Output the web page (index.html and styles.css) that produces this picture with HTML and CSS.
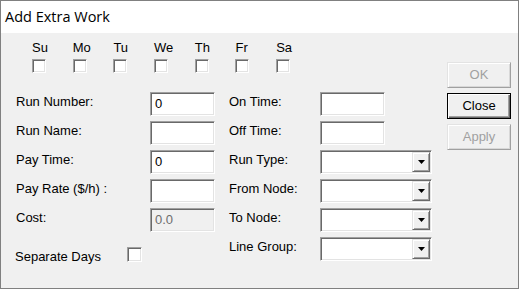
FILE: index.html
```html
<!DOCTYPE html>
<html lang="en">
<head>
<meta charset="UTF-8">
<title>Add Extra Work</title>
<link rel="stylesheet" href="styles.css">
</head>
<body>
<div class="window">
  <div class="titlebar">Add Extra Work</div>
  <div class="client">
    <div class="main">
      <div class="days">
        <div class="day"><span class="day-name">Su</span><span class="check"></span></div>
        <div class="day"><span class="day-name">Mo</span><span class="check"></span></div>
        <div class="day"><span class="day-name">Tu</span><span class="check"></span></div>
        <div class="day"><span class="day-name">We</span><span class="check"></span></div>
        <div class="day"><span class="day-name">Th</span><span class="check"></span></div>
        <div class="day"><span class="day-name">Fr</span><span class="check"></span></div>
        <div class="day"><span class="day-name">Sa</span><span class="check"></span></div>
      </div>

      <div class="form">
        <div class="col col-left">
          <div class="field"><span class="label">Run Number:</span><div class="edit">0</div></div>
          <div class="field"><span class="label">Run Name:</span><div class="edit"></div></div>
          <div class="field"><span class="label">Pay Time:</span><div class="edit">0</div></div>
          <div class="field"><span class="label">Pay Rate ($/h) :</span><div class="edit"></div></div>
          <div class="field"><span class="label">Cost:</span><div class="edit disabled">0.0</div></div>
          <div class="separate"><span class="label">Separate Days</span><span class="check big"></span></div>
        </div>

        <div class="col col-right">
          <div class="field"><span class="label">On Time:</span><div class="edit"></div></div>
          <div class="field"><span class="label">Off Time:</span><div class="edit"></div></div>
          <div class="field"><span class="label">Run Type:</span>
            <div class="combo"><div class="combo-text"></div><div class="drop"><svg width="7" height="4" viewBox="0 0 7 4"><polygon points="0,0 7,0 3.5,4" fill="#000"/></svg></div></div>
          </div>
          <div class="field"><span class="label">From Node:</span>
            <div class="combo"><div class="combo-text"></div><div class="drop"><svg width="7" height="4" viewBox="0 0 7 4"><polygon points="0,0 7,0 3.5,4" fill="#000"/></svg></div></div>
          </div>
          <div class="field"><span class="label">To Node:</span>
            <div class="combo"><div class="combo-text"></div><div class="drop"><svg width="7" height="4" viewBox="0 0 7 4"><polygon points="0,0 7,0 3.5,4" fill="#000"/></svg></div></div>
          </div>
          <div class="field"><span class="label">Line Group:</span>
            <div class="combo"><div class="combo-text"></div><div class="drop"><svg width="7" height="4" viewBox="0 0 7 4"><polygon points="0,0 7,0 3.5,4" fill="#000"/></svg></div></div>
          </div>
        </div>
      </div>
    </div>

    <div class="buttons">
      <div class="btn disabled">OK</div>
      <div class="btn default">Close</div>
      <div class="btn disabled">Apply</div>
    </div>
  </div>
</div>
</body>
</html>
```

FILE: styles.css
```css
html, body {
  margin: 0;
  background: #fff;
}
body {
  font-family: "Liberation Sans", Arial, sans-serif;
  font-size: 13px;
  color: #000;
}
.window {
  width: 517px;
  height: 287px;
  border: 1px solid #808080;
  background: #f0f0f0;
  display: flex;
  flex-direction: column;
}
.titlebar {
  height: 32px;
  box-sizing: border-box;
  padding: 6px 0 0 4px;
  background: #fff;
  font-family: "Open Sans", "Noto Sans", sans-serif;
  font-size: 14.5px;
  line-height: 20px;
}
.client {
  display: flex;
  flex: 1;
}
.main {
  flex: 1;
  padding-top: 7px;
}

/* week days */
.days {
  display: grid;
  grid-template-columns: repeat(7, 40.7px);
  margin-left: 31px;
}
.day {
  display: flex;
  flex-direction: column;
  align-items: flex-start;
}
.day-name {
  line-height: 15px;
}
.day .check {
  margin-top: 4px;
}
.check {
  display: block;
  width: 14px;
  height: 14px;
  box-sizing: border-box;
  background: #fff;
  border: 1px solid;
  border-color: #a0a0a0 #fff #fff #a0a0a0;
  box-shadow: inset 1px 1px #696969, inset -1px -1px #e3e3e3;
}
.check.big {
  width: 15px;
  height: 15px;
}

/* form */
.form {
  display: flex;
  margin-top: 19px;
  padding-left: 15px;
}
.col {
  display: flex;
  flex-direction: column;
  gap: 5px;
}
.col-left .label {
  width: 134px;
}
.col-right {
  margin-left: 14px;
}
.col-right .label {
  width: 91px;
}
.field {
  display: flex;
  align-items: flex-start;
  height: 24px;
}
.label {
  padding-top: 2px;
  line-height: 15px;
  white-space: nowrap;
}
.edit {
  width: 65px;
  height: 24px;
  box-sizing: border-box;
  padding-left: 4px;
  line-height: 22px;
  background: #fff;
  border: 1px solid;
  border-color: #a0a0a0 #fff #fff #a0a0a0;
  box-shadow: inset 1px 1px #696969, inset -1px -1px #e3e3e3;
}
.edit.disabled {
  background: #f0f0f0;
  color: #6d6d6d;
}
.combo {
  display: flex;
  width: 112px;
  height: 24px;
  box-sizing: border-box;
  padding: 1px;
  background: #fff;
  border: 1px solid;
  border-color: #a0a0a0 #fff #fff #a0a0a0;
  box-shadow: inset 1px 1px #696969, inset -1px -1px #e3e3e3;
}
.combo-text {
  flex: 1;
}
.drop {
  width: 18px;
  height: 20px;
  box-sizing: border-box;
  display: flex;
  align-items: center;
  justify-content: center;
  background: #f0f0f0;
  border: 1px solid;
  border-color: #e3e3e3 #696969 #696969 #e3e3e3;
  box-shadow: inset 1px 1px #fff, inset -1px -1px #a0a0a0;
}
.drop svg {
  display: block;
}
.separate {
  display: flex;
  align-items: flex-start;
  margin-top: 10px;
  margin-left: -1px;
}
.separate .label {
  width: 112px;
  padding-top: 2px;
}

/* buttons */
.buttons {
  display: flex;
  flex-direction: column;
  gap: 5px;
  margin: 29px 7px 0 0;
}
.btn {
  width: 64px;
  height: 26px;
  box-sizing: border-box;
  text-align: center;
  line-height: 24px;
  background: #f0f0f0;
  border: 1px solid;
  border-color: #fff #696969 #696969 #fff;
  box-shadow: inset 1px 1px #e3e3e3, inset -1px -1px #a0a0a0;
}
.btn.disabled {
  color: #a0a0a0;
  border-color: #e3e3e3 #a0a0a0 #a0a0a0 #e3e3e3;
  box-shadow: inset 1px 1px #fff, inset -1px -1px #d8d8d8;
}
.btn.default {
  border-color: #000;
  box-shadow: inset 1px 1px #fff, inset -1px -1px #696969, inset -2px -2px #a0a0a0;
}
```
